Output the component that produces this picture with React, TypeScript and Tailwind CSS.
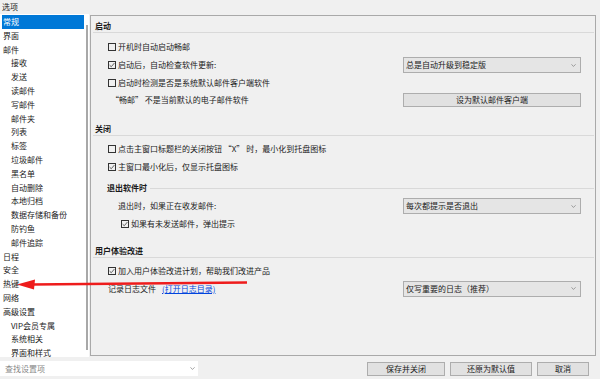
import { ReactNode } from "react";

const navItems: { label: string; sub?: boolean; active?: boolean }[] = [
  { label: "常规", active: true },
  { label: "界面" },
  { label: "邮件" },
  { label: "接收", sub: true },
  { label: "发送", sub: true },
  { label: "读邮件", sub: true },
  { label: "写邮件", sub: true },
  { label: "邮件夹", sub: true },
  { label: "列表", sub: true },
  { label: "标签", sub: true },
  { label: "垃圾邮件", sub: true },
  { label: "黑名单", sub: true },
  { label: "自动删除", sub: true },
  { label: "本地归档", sub: true },
  { label: "数据存储和备份", sub: true },
  { label: "防钓鱼", sub: true },
  { label: "邮件追踪", sub: true },
  { label: "日程" },
  { label: "安全" },
  { label: "热键" },
  { label: "网络" },
  { label: "高级设置" },
  { label: "VIP会员专属", sub: true },
  { label: "系统相关", sub: true },
  { label: "界面和样式", sub: true },
];

function Check({ checked, label }: { checked?: boolean; label: ReactNode }) {
  return (
    <div className="flex items-center">
      <span className="w-[8px] h-[8px] border border-[#333] bg-[#f0f0f0] flex items-center justify-center">
        {checked && (
          <svg viewBox="0 0 8 8" className="w-[6px] h-[6px]">
            <path d="M0.8 4.2 L3 6.3 L7.2 1.4" fill="none" stroke="#333" strokeWidth="1" />
          </svg>
        )}
      </span>
      <span className="ml-[2px]">{label}</span>
    </div>
  );
}

function Dropdown({ value }: { value: string }) {
  return (
    <div className="ml-auto mr-[14px] w-[178px] h-[16px] bg-[#e5e5e5] border border-[#adadad] flex items-center pl-[2px] pr-[4px]">
      <span className="flex-1">{value}</span>
      <svg viewBox="0 0 8 5" className="w-[5px] h-[3px]">
        <path d="M0.5 0.5 L4 4 L7.5 0.5" fill="none" stroke="#666" strokeWidth="1" />
      </svg>
    </div>
  );
}

function Header({ title }: { title: string }) {
  return (
    <div className="ml-[2px] mr-[1px] pl-[2px] border-b border-[#d9d9d9] font-bold leading-[12px]">
      {title}
    </div>
  );
}

export default function App() {
  return (
    <div
      className="relative w-[600px] h-[379px] bg-[#f0f0f0] text-[8px] text-[#1a1a1a] overflow-hidden"
      style={{ fontFamily: '"Noto Sans CJK SC", "Noto Sans", sans-serif' }}
    >
      <div className="h-[14px] px-[2px] leading-[13px]">选项</div>

      <div className="flex h-[343px]">
        <div className="relative w-[89px] bg-white pt-[1px]">
          {navItems.map((it) => (
            <div
              key={it.label}
              className={
                "h-[13.8px] leading-[13.8px] ml-[2px] w-[82px] " +
                (it.sub ? "pl-[9px] " : "pl-[1px] ") +
                (it.active ? "bg-[#0078d7] text-white" : "")
              }
            >
              {it.label}
            </div>
          ))}
          <div className="absolute right-[1px] top-[11px] w-[2px] h-[325px] bg-[#a8a8a8]" />
        </div>

        <div className="flex-1 mt-[1px] mb-[1px] ml-[1px] mr-[4px] border border-[#a9a9a9] flex flex-col">
          <div className="mt-[4px]">
            <Header title="启动" />
          </div>
          <div className="mt-[5px] h-[18px] flex items-center pl-[17px]">
            <Check label="开机时自动启动畅邮" />
          </div>
          <div className="h-[18px] flex items-center pl-[17px]">
            <Check checked label="启动后，自动检查软件更新:" />
            <Dropdown value="总是自动升级到稳定版" />
          </div>
          <div className="h-[17px] flex items-center pl-[17px]">
            <Check label="启动时检测是否是系统默认邮件客户端软件" />
          </div>
          <div className="h-[17px] flex items-center pl-[20px]">
            <span>“畅邮” 不是当前默认的电子邮件软件</span>
            <div className="ml-auto mr-[14px] w-[178px] h-[14px] bg-[#e1e1e1] border border-[#adadad] flex items-center justify-center">
              设为默认邮件客户端
            </div>
          </div>

          <div className="mt-[15px]">
            <Header title="关闭" />
          </div>
          <div className="mt-[4px] h-[18px] flex items-center pl-[17px]">
            <Check label="点击主窗口标题栏的关闭按钮 “X” 时，最小化到托盘图标" />
          </div>
          <div className="h-[18px] flex items-center pl-[17px]">
            <Check checked label="主窗口最小化后，仅显示托盘图标" />
          </div>

          <div className="mt-[6px] h-[12px] flex items-center pl-[16px] mr-[1px]">
            <span className="font-bold">退出软件时</span>
            <div className="flex-1 h-px bg-[#d9d9d9] ml-[3px]" />
          </div>
          <div className="mt-[3px] h-[18px] flex items-center pl-[27px]">
            <span>退出时，如果正在收发邮件:</span>
            <Dropdown value="每次都提示是否退出" />
          </div>
          <div className="h-[18px] flex items-center pl-[30px]">
            <Check checked label="如果有未发送邮件，弹出提示" />
          </div>

          <div className="mt-[12px]">
            <Header title="用户体验改进" />
          </div>
          <div className="mt-[4px] h-[18px] flex items-center pl-[17px]">
            <Check checked label="加入用户体验改进计划，帮助我们改进产品" />
          </div>
          <div className="h-[17px] flex items-center pl-[17px]">
            <span>记录日志文件</span>
            <span className="ml-[6px] text-[#0044dd] underline">(打开日志目录)</span>
            <Dropdown value="仅写重要的日志（推荐）" />
          </div>
        </div>
      </div>

      <div className="flex items-center h-[22px] pt-[1px]">
        <div className="w-[198px] h-[15px] bg-white flex items-center pl-[5px] pr-[3px] text-[#888]">
          <span className="flex-1">查找设置项</span>
          <svg viewBox="0 0 8 5" className="w-[5px] h-[3px]">
            <path d="M0.5 0.5 L4 4 L7.5 0.5" fill="none" stroke="#666" strokeWidth="1" />
          </svg>
        </div>
        <div className="ml-auto mr-[11px] flex gap-[5px]">
          <div className="w-[78px] h-[14px] bg-[#e1e1e1] border border-[#adadad] flex items-center justify-center">
            保存并关闭
          </div>
          <div className="w-[82px] h-[14px] bg-[#e1e1e1] border border-[#adadad] flex items-center justify-center">
            还原为默认值
          </div>
          <div className="w-[52px] h-[14px] bg-[#e1e1e1] border border-[#adadad] flex items-center justify-center">
            取消
          </div>
        </div>
      </div>

      <svg className="absolute inset-0 pointer-events-none" width="600" height="379" viewBox="0 0 600 379">
        <path d="M247 282.5 Q 150 283.5 32 284.5" fill="none" stroke="#ee1c1c" strokeWidth="2.6" />
        <polygon points="17,284.5 35,279.5 34,289.5" fill="#ee1c1c" />
      </svg>
    </div>
  );
}
